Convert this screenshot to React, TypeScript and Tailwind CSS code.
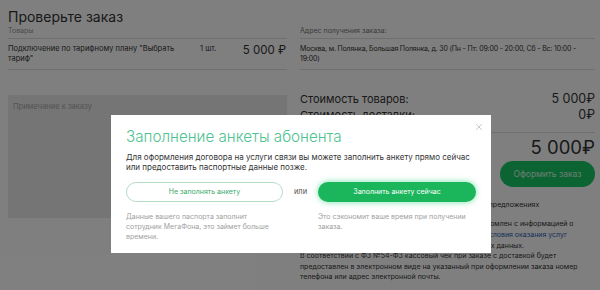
import { X } from "lucide-react";

const font = "font-['Inter','Liberation_Sans',sans-serif]";

const OrderRow = () => (
  <div className="flex items-start border-b border-[#dedede] pt-[5px] pb-[5px] text-[7.5px] leading-[10px] text-[#333]">
    <div className="w-[180px] shrink-0">Подключение по тарифному плану "Выбрать тариф"</div>
    <div className="ml-[12px]">1 шт.</div>
    <div className="ml-auto text-[11.5px] leading-[10px] pt-[1px] pr-[1px]">5 000 ₽</div>
  </div>
);

const Page = () => (
  <div className="flex gap-[13px] pl-[8px] pr-[5px]">
    <div className="w-[279px] shrink-0">
      <h1 className="mt-[8px] h-[18px] text-[14px] leading-[18px] text-[#333]">Проверьте заказ</h1>
      <div className="border-b border-[#dedede] pb-[2px] text-[7px] leading-[10px] text-[#999]">Товары</div>
      <OrderRow />
      <div className="mt-[25px] h-[123px] bg-[#eaeaea] px-[5px] pt-[7px] text-[7.5px] leading-[10px] text-[#a8a8a8]">
        Примечание к заказу
      </div>
    </div>

    <div className="flex flex-1 flex-col">
      <div className="border-b border-[#dedede] pt-[26px] pb-[2px] text-[7px] leading-[10px] text-[#777]">
        Адрес получения заказа:
      </div>
      <div className="border-b border-[#dedede] pt-[5px] pb-[5px] text-[7px] leading-[10px] tracking-[-0.18px] text-[#333]">
        Москва, м. Полянка, Большая Полянка, д. 30 (Пн - Пт: 09:00 - 20:00, Сб - Вс: 10:00 - 19:00)
      </div>
      <div className="mt-[21px] border-b border-[#dedede] pb-[9px] text-[11px] leading-[16px] text-[#333]">
        <div className="flex justify-between">
          <span>Стоимость товаров:</span>
          <span className="text-[12.5px]">5 000₽</span>
        </div>
        <div className="flex justify-between">
          <span>Стоимость доставки:</span>
          <span className="text-[12.5px]">0₽</span>
        </div>
      </div>
      <div className="mt-[3px] text-right text-[18.5px] leading-[22px] text-[#333]">5 000₽</div>
      <button className="mt-[3px] h-[26px] w-[95px] self-end rounded-full bg-[#17c964] text-[8.5px] text-[#dcf7e6]">
        Оформить заказ
      </button>
      <div className="mt-[13px] whitespace-nowrap text-[7px] leading-[10px] text-[#333]">
        Хочу получать информацию об акциях и специальных предложениях
      </div>
      <div className="mt-[8px] whitespace-nowrap text-[7px] leading-[11px] text-[#333]">
        Подтверждаю, что я заранее и в полном объеме ознакомлен с информацией о
        <br />
        тарифе, дополнительных услугах и принимаю общие <span className="text-[#2d5fb0]">условия оказания услуг</span>
        <br />
        связи и даю согласие на обработку моих персональных данных.
      </div>
      <div className="text-[7px] leading-[10.5px] text-[#333]">
        В соответствии с ФЗ №54-ФЗ кассовый чек при заказе с доставкой будет предоставлен в электронном виде на
        указанный при оформлении заказа номер телефона или адрес электронной почты.
      </div>
    </div>
  </div>
);

const Modal = () => (
  <div className="absolute left-[111px] top-[115px] h-[138px] w-[380px] bg-white px-[15px] pt-[12px]">
    <button className="absolute right-[7px] top-[7px] text-[#a8a8a8]">
      <X size={10} strokeWidth={1.5} />
    </button>
    <div className="text-[15.2px] font-light leading-[20px] text-[#4cc290]">Заполнение анкеты абонента</div>
    <p className="mt-[5px] text-[8px] leading-[10px] text-[#333]">
      Для оформления договора на услуги связи вы можете заполнить анкету прямо сейчас или предоставить паспортные данные позже.
    </p>
    <div className="mt-[10px] grid grid-cols-[157px_1fr_158px] items-center gap-x-[10px]">
      <button className="h-[20px] rounded-full border border-[#b5dcc6] text-[7px] text-[#3aaa6a]">
        Не заполнять анкету
      </button>
      <span className="text-center text-[7.5px] text-[#555]">или</span>
      <button className="h-[20px] rounded-full bg-[#1bb55c] text-[7px] text-white shadow-[0_0_6px_rgba(0,200,100,0.55)]">
        Заполнить анкету сейчас
      </button>
      <p className="mt-[10px] pr-[10px] text-[7px] leading-[10px] text-[#a0a0a0]">
        Данные вашего паспорта заполнит сотрудник МегаФона, это займет больше времени.
      </p>
      <span />
      <p className="mt-[10px] self-start text-[7px] leading-[10px] text-[#a0a0a0]">
        Это сэкономит ваше время при получении заказа.
      </p>
    </div>
  </div>
);

export default function App() {
  return (
    <div className={`relative h-[290px] w-[600px] overflow-hidden bg-white ${font}`}>
      <Page />
      <div className="absolute inset-0 bg-black/50" />
      <Modal />
    </div>
  );
}
